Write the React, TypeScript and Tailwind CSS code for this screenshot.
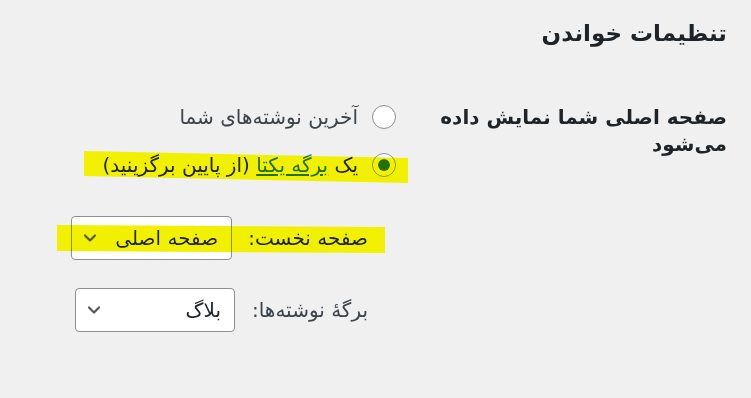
import React from 'react';

const Chevron = () => (
  <svg width="16" height="16" viewBox="0 0 16 16" fill="none" className="text-[#50575e]">
    <path d="M3 5.5 8 10.5 13 5.5" stroke="currentColor" strokeWidth="2.2" strokeLinecap="round" strokeLinejoin="round" />
  </svg>
);

const Radio: React.FC<{ checked?: boolean }> = ({ checked }) => (
  <span className="w-[24px] h-[24px] shrink-0 rounded-full border border-[#8c8f94] bg-white flex items-center justify-center">
    {checked && <span className="w-[12px] h-[12px] rounded-full bg-[#2271b1]" />}
  </span>
);

const Select: React.FC<{ value: string; width: string }> = ({ value, width }) => (
  <div className={`${width} h-[44px] rounded-[4px] border border-[#8c8f94] bg-white flex items-center justify-between pr-[13px] pl-[10px]`}>
    <span>{value}</span>
    <Chevron />
  </div>
);

export default function App() {
  return (
    <div
      dir="rtl"
      className="w-[751px] h-[398px] overflow-hidden bg-[#f0f0f1] text-[#1d2327] pr-[24px] pt-[15px]"
      style={{ fontFamily: '"DejaVu Sans", sans-serif' }}
    >
      <h1 className="text-[23px] leading-[36px] font-bold">تنظیمات خواندن</h1>

      <div className="flex mt-[42px]">
        <div className="w-[331px] shrink-0 pt-[11px] text-[20px] leading-[27px] font-bold">
          صفحه اصلی شما نمایش داده
          <br />
          می‌شود
        </div>

        <div className="relative flex-1 text-[20px]">
          <label className="h-[48px] flex items-center gap-[14px]">
            <Radio />
            <span className="text-[#3c434a]">آخرین نوشته‌های شما</span>
          </label>
          <label className="h-[48px] flex items-center gap-[14px]">
            <Radio checked />
            <span>
              یک{' '}
              <a className="text-[#2271b1] underline underline-offset-2">برگه یکتا</a>{' '}
              (از پایین برگزینید)
            </span>
          </label>

          <div className="mr-[28px] mt-[27px] flex flex-col gap-[28px]">
            <div className="flex items-center gap-[16px]">
              <span>صفحه نخست:</span>
              <Select value="صفحه اصلی" width="w-[161px]" />
            </div>
            <div className="flex items-center gap-[17px]">
              <span className="text-[#3c434a]">برگهٔ نوشته‌ها:</span>
              <Select value="بلاگ" width="w-[160px]" />
            </div>
          </div>

          {/* marker highlights */}
          <div className="absolute left-[84px] top-[58px] w-[324px] h-[32px] bg-[#f0f000] mix-blend-darken pointer-events-none [clip-path:polygon(0_0,100%_7px,100%_100%,0_calc(100%-7px))]" />
          <div className="absolute left-[57px] top-[132px] w-[328px] h-[28px] bg-[#f0f000] mix-blend-darken pointer-events-none [clip-path:polygon(0_0,100%_2px,100%_100%,0_calc(100%-2px))]" />
        </div>
      </div>
    </div>
  );
}
